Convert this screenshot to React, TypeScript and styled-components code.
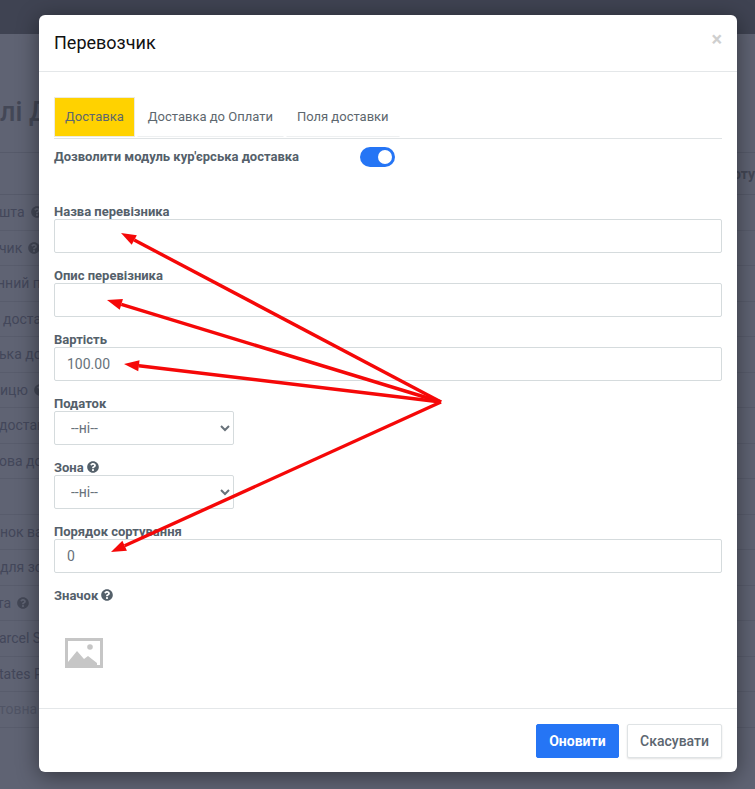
import React from "react";
import styled, {createGlobalStyle} from "styled-components";
import {FaQuestionCircle} from "react-icons/fa";

const Global = createGlobalStyle`
  html, body {
    margin: 0;
    padding: 0;
    height: 100%;
    overflow: hidden;
    background: #5f6373;
    font-family: Roboto, "Liberation Sans", sans-serif;
  }
`;

//--------Page behind the modal--------------------------------
const Page = styled.div`
  width: 755px;
  height: 789px;
  position: relative;
  overflow: hidden;
  background: #5f6373;
`;
const TopBar = styled.div`
  height: 34px;
  background: #3f4352;
`;
const Heading = styled.h1`
  margin: 0;
  height: 119px;
  box-sizing: border-box;
  padding: 63px 0 0 0;
  font-size: 27px;
  line-height: 30px;
  font-weight: 500;
  color: #434756;
  white-space: nowrap;
  border-bottom: 1px solid #565a6a;
`;
const TableHead = styled.div`
  height: 41px;
  display: flex;
  align-items: center;
  justify-content: flex-end;
  font-size: 14px;
  font-weight: 700;
  color: #434756;
  border-bottom: 1px solid #565a6a;
`;
const Row = styled.div<{$faded?: boolean}>`
  height: 35.5px;
  box-sizing: border-box;
  display: flex;
  align-items: center;
  gap: 6px;
  font-size: 14px;
  white-space: nowrap;
  color: ${p => (p.$faded ? "#505465" : "#43475a")};
  border-bottom: 1px solid #585c6c;
`;
const RowText = styled.span<{$shift?: number}>`
  margin: 0 0 0 ${p => p.$shift || 0}px;
`;
const RowHelp = styled(FaQuestionCircle)`
  font-size: 12px;
  color: #434756;
`;

//--------Modal--------------------------------
const Overlay = styled.div`
  position: absolute;
  inset: 0;
  padding: 15px 0 0 39px;
`;
const Modal = styled.div`
  width: 698px;
  height: 757px;
  display: flex;
  flex-direction: column;
  background: #fff;
  border-radius: 6px;
  box-shadow: 0 4px 22px rgba(0, 0, 0, 0.45);
`;
const Header = styled.div`
  height: 57px;
  box-sizing: border-box;
  display: flex;
  align-items: center;
  justify-content: space-between;
  padding: 0 15px 2px 15px;
  border-bottom: 1px solid #e4e7e9;
`;
const Title = styled.h4`
  margin: 0;
  font-size: 18px;
  font-weight: 400;
  color: #111;
`;
const Close = styled.span`
  font-size: 20px;
  line-height: 20px;
  font-weight: 700;
  margin: -6px 0 0 0;
  color: #cfcfcf;
`;
const Body = styled.div`
  height: 636px;
  box-sizing: border-box;
  padding: 25px 15px 0 15px;
`;
const Tabs = styled.div`
  display: flex;
  gap: 2px;
  height: 42px;
  box-sizing: border-box;
  border-bottom: 1px solid #dfe3e5;
`;
const Tab = styled.div<{$active?: boolean}>`
  height: 40px;
  box-sizing: border-box;
  padding: 0 10px 1px 10px;
  display: flex;
  align-items: center;
  font-size: 13px;
  color: #5d676e;
  background: ${p => (p.$active ? "#ffd200" : "transparent")};
  border: 1px solid ${p => (p.$active ? "#eceae0" : "transparent")};
  border-bottom: 1px solid ${p => (p.$active ? "#eceae0" : "#eef0f1")};
`;
const ToggleRow = styled.div`
  height: 66px;
  box-sizing: border-box;
  padding: 7px 0 0 0;
  display: flex;
  align-items: flex-start;
`;
const ToggleLabel = styled.span`
  width: 306px;
  font-size: 13px;
  line-height: 21px;
  font-weight: 700;
  color: #54606a;
`;
const Switch = styled.span`
  width: 35px;
  height: 20px;
  margin: 1px 0 0 0;
  box-sizing: border-box;
  padding: 3px 3px 3px 18px;
  border-radius: 10px;
  background: #2575f5;
  &::after {
    content: "";
    display: block;
    width: 14px;
    height: 14px;
    border-radius: 50%;
    background: #fff;
  }
`;
const Field = styled.div`
  height: 64px;
`;
const Label = styled.label`
  display: flex;
  align-items: center;
  gap: 3px;
  height: 14px;
  box-sizing: border-box;
  padding: 0 0 2px 0;
  font-size: 13px;
  font-weight: 700;
  color: #54606a;
`;
const Help = styled(FaQuestionCircle)`
  font-size: 12px;
  color: #54606a;
`;
const Input = styled.input`
  display: block;
  width: 100%;
  height: 34px;
  box-sizing: border-box;
  padding: 0 12px;
  font-family: Roboto, "Liberation Sans", sans-serif;
  font-size: 14px;
  color: #68727a;
  background: #fff;
  border: 1px solid #d5dbdd;
  border-radius: 2px;
  outline: none;
`;
const Select = styled.select`
  display: block;
  width: 180px;
  height: 34px;
  box-sizing: border-box;
  padding: 0 12px;
  font-family: Roboto, "Liberation Sans", sans-serif;
  font-size: 14px;
  color: #68727a;
  background: #fff;
  border: 1px solid #d5dbdd;
  border-radius: 2px;
  outline: none;
`;
const Thumb = styled.div`
  padding: 35px 0 0 11px;
  height: 30px;
`;
const Footer = styled.div`
  height: 64px;
  box-sizing: border-box;
  display: flex;
  align-items: center;
  justify-content: flex-end;
  gap: 8px;
  padding: 1px 15px 0 0;
  border-top: 1px solid #e4e7e9;
`;
const Button = styled.button<{$primary?: boolean}>`
  height: 34px;
  box-sizing: border-box;
  font-family: Roboto, "Liberation Sans", sans-serif;
  font-size: 14px;
  font-weight: ${p => (p.$primary ? 700 : 500)};
  padding: 0 ${p => (p.$primary ? "12.5px" : "12px")};
  color: ${p => (p.$primary ? "#fff" : "#5c6670")};
  background: ${p => (p.$primary ? "#2575f5" : "#fff")};
  border: 1px solid ${p => (p.$primary ? "#2575f5" : "#dfe3e5")};
  border-radius: 2px;
  box-shadow: ${p => (p.$primary ? "none" : "0 1px 2px rgba(0,0,0,.12)")};
`;
const Arrows = styled.svg`
  position: absolute;
  left: 0;
  top: 0;
  pointer-events: none;
`;

const rows: {text?: string; help?: boolean; faded?: boolean; shift?: number}[] = [
    {text: "ошта", help: true, shift: -9},
    {text: "чик", help: true, shift: -1},
    {text: "нний п", shift: -3},
    {text: "доста", shift: 3},
    {text: "ька дос", shift: -1},
    {text: "ицю", help: true},
    {text: "достав", shift: -1},
    {text: "ова дос", shift: -1},
    {},
    {text: "нок ва"},
    {text: "для зо"},
    {text: "та", help: true, shift: -3},
    {text: "arcel S", shift: -1},
    {text: "tates P", shift: -1},
    {text: "товна д", faded: true, shift: -1},
];

const tips: [number, number][] = [[121, 233], [107, 300], [124, 364], [111, 552]];

// red arrows from the one point to each field
const Arrow = ({x, y}: {x: number; y: number}) => {
    const ox = 441, oy = 402;
    const len = Math.hypot(ox - x, oy - y);
    const ux = (ox - x) / len, uy = (oy - y) / len;
    const bx = x + ux * 15, by = y + uy * 15;
    const nx = -uy * 5.5, ny = ux * 5.5;
    return (
        <g>
            <line x1={ox} y1={oy} x2={bx} y2={by} stroke="#f50808" strokeWidth="3.4"/>
            <polygon points={`${x},${y} ${bx + nx},${by + ny} ${bx - nx},${by - ny}`} fill="#f50808"/>
        </g>
    );
};

const App = () => {
    return (
        <Page>
            <Global/>
            <TopBar/>
            <Heading>лі Д</Heading>
            <TableHead>оту</TableHead>
            {rows.map((it, i) =>
                <Row key={i} $faded={it.faded}>
                    <RowText $shift={it.shift}>{it.text}</RowText>
                    {it.help && <RowHelp/>}
                </Row>)}
            <Overlay>
                <Modal>
                    <Header>
                        <Title>Перевозчик</Title>
                        <Close>×</Close>
                    </Header>
                    <Body>
                        <Tabs>
                            <Tab $active>Доставка</Tab>
                            <Tab>Доставка до Оплати</Tab>
                            <Tab>Поля доставки</Tab>
                        </Tabs>
                        <ToggleRow>
                            <ToggleLabel>Дозволити модуль кур'єрська доставка</ToggleLabel>
                            <Switch/>
                        </ToggleRow>
                        <Field>
                            <Label>Назва перевізника</Label>
                            <Input defaultValue=""/>
                        </Field>
                        <Field>
                            <Label>Опис перевізника</Label>
                            <Input defaultValue=""/>
                        </Field>
                        <Field>
                            <Label>Вартість</Label>
                            <Input defaultValue="100.00"/>
                        </Field>
                        <Field>
                            <Label>Податок</Label>
                            <Select><option>--ні--</option></Select>
                        </Field>
                        <Field>
                            <Label>Зона <Help/></Label>
                            <Select><option>--ні--</option></Select>
                        </Field>
                        <Field>
                            <Label>Порядок сортування</Label>
                            <Input defaultValue="0"/>
                        </Field>
                        <Label>Значок <Help/></Label>
                        <Thumb>
                            <svg width="38" height="30" viewBox="0 0 38 30">
                                <path fill="#c6c6c6" fillRule="evenodd"
                                      d="M0 0h38v30H0zM3 3v24h32V3z"/>
                                <circle cx="25" cy="9" r="2.8" fill="#c6c6c6"/>
                                <path fill="#c6c6c6" d="M3 24l9-11 7 8 4-3 9 7v2H3z"/>
                            </svg>
                        </Thumb>
                    </Body>
                    <Footer>
                        <Button $primary>Оновити</Button>
                        <Button>Скасувати</Button>
                    </Footer>
                </Modal>
            </Overlay>
            <Arrows width="755" height="789">
                {tips.map(([x, y]) => <Arrow key={x} x={x} y={y}/>)}
            </Arrows>
        </Page>
    );
};
export default App;
